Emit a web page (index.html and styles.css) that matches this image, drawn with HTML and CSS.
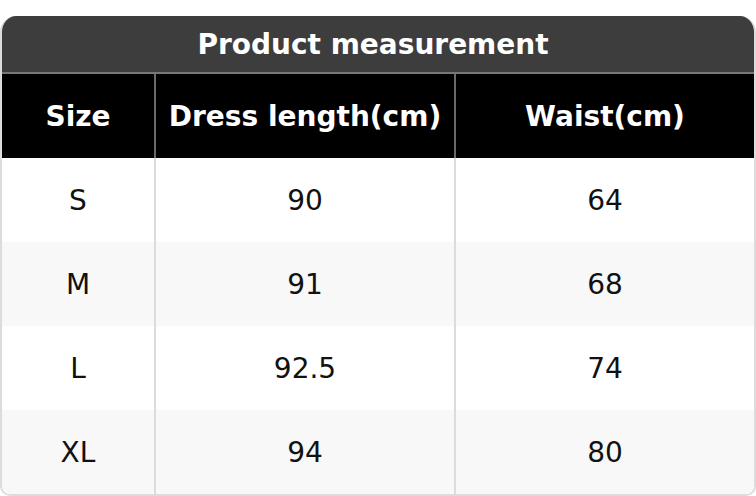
FILE: index.html
```html
<!DOCTYPE html>
<html>
<head>
<meta charset="utf-8">
<link rel="stylesheet" href="styles.css">
</head>
<body>
<div class="table">
  <div class="title">Product measurement</div>
  <div class="grid">
    <div class="th">Size</div>
    <div class="th">Dress length(cm)</div>
    <div class="th last">Waist(cm)</div>

    <div class="td">S</div><div class="td">90</div><div class="td last">64</div>
    <div class="td alt">M</div><div class="td alt">91</div><div class="td alt last">68</div>
    <div class="td">L</div><div class="td">92.5</div><div class="td last">74</div>
    <div class="td alt">XL</div><div class="td alt">94</div><div class="td alt last">80</div>
  </div>
</div>
</body>
</html>
```

FILE: styles.css
```css
html, body {
  margin: 0;
  padding: 0;
  background: #fff;
}
body {
  font-family: "DejaVu Sans", sans-serif;
}
.table {
  margin-top: 16px;
  width: 756px;
  height: 480px;
  box-sizing: border-box;
  border-radius: 16px 16px 10px 10px;
  overflow: hidden;
  border: 2px solid #dcdcdc;
  border-top: none;
  display: flex;
  flex-direction: column;
}
.title {
  background: #3d3d3d;
  color: #fff;
  font-weight: bold;
  font-size: 28px;
  height: 58px;
  box-sizing: border-box;
  border-bottom: 2px solid #777;
  display: flex;
  align-items: center;
  justify-content: center;
  margin: 0 -2px;
  padding-right: 10px;
}
.grid {
  display: grid;
  grid-template-columns: 154px 300px 1fr;
  grid-template-rows: repeat(5, 84px);
}
.th, .td {
  display: flex;
  align-items: center;
  justify-content: center;
  border-right: 2px solid #dcdcdc;
}
.th {
  background: #000;
  color: #fff;
  font-weight: bold;
  font-size: 28px;
  border-right-color: #6a6a6a;
}
.td {
  background: #fff;
  color: #111;
  font-size: 28px;
}
.td.alt {
  background: #f8f8f8;
}
.last {
  border-right: none;
}
```
